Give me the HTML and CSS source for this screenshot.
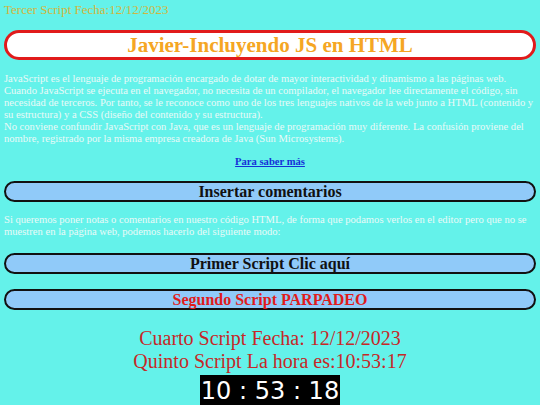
FILE: index.html
```html
<!DOCTYPE html>
<html lang="es">
<head>
<meta charset="utf-8">
<title>Javier-Incluyendo JS en HTML</title>
<link rel="stylesheet" href="styles.css">
</head>
<body>
<div class="tercer">Tercer Script Fecha:12/12/2023</div>
<h1 class="titulo">Javier-Incluyendo JS en HTML</h1>
<p class="texto">JavaScript es el lenguaje de programación encargado de dotar de mayor interactividad y dinamismo a las páginas web. Cuando JavaScript se ejecuta en el navegador, no necesita de un compilador, el navegador lee directamente el código, sin necesidad de terceros. Por tanto, se le reconoce como uno de los tres lenguajes nativos de la web junto a HTML (contenido y su estructura) y a CSS (diseño del contenido y su estructura).<br>No conviene confundir JavaScript con Java, que es un lenguaje de programación muy diferente. La confusión proviene del nombre, registrado por la misma empresa creadora de Java (Sun Microsystems).</p>
<p class="enlace"><a href="#">Para saber más</a></p>
<h2 class="caja caja-1">Insertar comentarios</h2>
<p class="texto texto-2">Si queremos poner notas o comentarios en nuestro código HTML, de forma que podamos verlos en el editor pero que no se muestren en la página web, podemos hacerlo del siguiente modo:</p>
<h2 class="caja caja-2">Primer Script Clic aquí</h2>
<h2 class="caja caja-3 roja">Segundo Script PARPADEO</h2>
<div class="grande grande-1">Cuarto Script Fecha: 12/12/2023</div>
<div class="grande">Quinto Script La hora es:10:53:17</div>
<div class="reloj-wrap"><span class="reloj">10 : 53 : 18</span></div>
</body>
</html>
```
FILE: styles.css
```css
html, body {
  margin: 0;
  background: #64f2ea;
}
body {
  padding: 2px 4px 0;
  font-family: "Liberation Serif", "Times New Roman", serif;
}
.tercer {
  color: #d2b63e;
  font-size: 13px;
  line-height: 15px;
}
.titulo {
  margin: 13px 0 0;
  height: 24px;
  background: #ffffff;
  border: 3px solid #e11b1b;
  border-radius: 15px;
  color: #f5a623;
  font-size: 21px;
  line-height: 24px;
  text-align: center;
}
.texto {
  margin: 13px 0 0;
  color: #eafaf8;
  font-size: 10.6px;
  line-height: 12px;
}
.enlace {
  margin: 11px 0 0;
  text-align: center;
  font-size: 10.6px;
  font-weight: bold;
  line-height: 12px;
}
.enlace a {
  color: #1530d8;
}
.caja {
  margin: 13px 0 0;
  height: 17px;
  background: #90caf9;
  border: 2px solid #111;
  border-radius: 12px;
  color: #111;
  font-size: 16px;
  line-height: 17px;
  text-align: center;
}
.texto-2 { margin-top: 12px; }
.caja-2 { margin-top: 15px; }
.caja-3 { margin-top: 15px; }
.roja {
  color: #e01b1b;
}
.grande {
  color: #c62828;
  font-size: 20px;
  line-height: 23px;
  text-align: center;
}
.grande-1 { margin-top: 17px; }
.reloj-wrap {
  text-align: center;
  margin-top: 2px;
  line-height: 0;
}
.reloj {
  display: inline-block;
  background: #000;
  color: #fff;
  font-family: "DejaVu Sans", Verdana, sans-serif;
  font-size: 24px;
  line-height: 32px;
  padding: 0 1px;
}
```
